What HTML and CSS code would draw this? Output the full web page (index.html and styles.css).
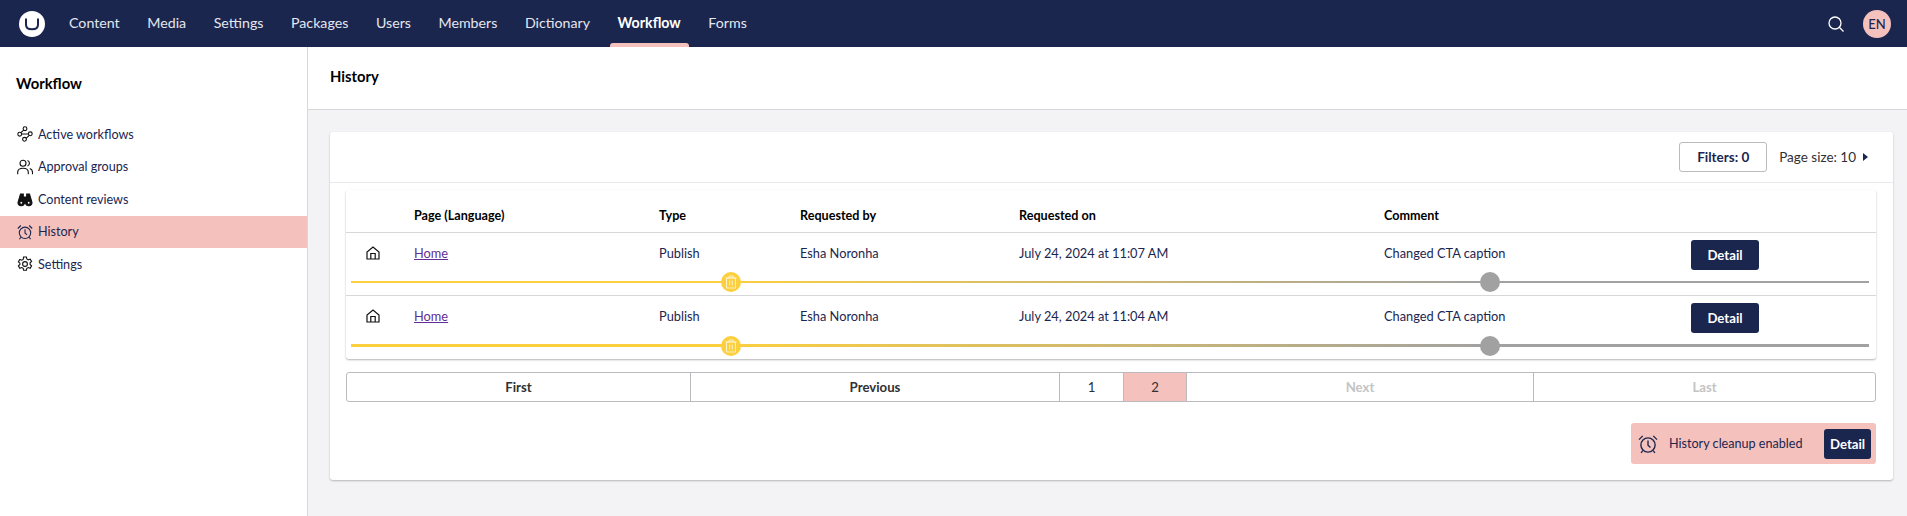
FILE: index.html
```html
<!DOCTYPE html>
<html lang="en">
<head>
    <meta charset="UTF-8">
    <meta name="viewport" content="width=device-width, initial-scale=1.0">
    <title>Workflow - History</title>
    <link rel="stylesheet" href="styles.css">
</head>
<body>
    <header class="topbar">
        <div class="logo">
            <svg viewBox="0 0 26 26" width="26" height="26"><circle cx="13" cy="13" r="13" fill="#fff"/><path d="M7 7.500v6.300c0 3.200 2 4.500 6 4.500s6-1.300 6-4.500V7.500" fill="none" stroke="#1b264f" stroke-width="2"/></svg>
        </div>
        <nav class="mainnav">
            <a href="#">Content</a>
            <a href="#">Media</a>
            <a href="#">Settings</a>
            <a href="#">Packages</a>
            <a href="#">Users</a>
            <a href="#">Members</a>
            <a href="#">Dictionary</a>
            <a href="#" class="active">Workflow</a>
            <a href="#">Forms</a>
        </nav>
        <div class="topbar-right">
            <svg class="search-icon" viewBox="0 0 16 16" width="16" height="16"><circle cx="7" cy="7" r="6" fill="none" stroke="#fff" stroke-width="1.300"/><path d="M11.300 11.300 15.500 15.500" stroke="#fff" stroke-width="1.300"/></svg>
            <div class="avatar">EN</div>
        </div>
    </header>

    <div class="layout">
        <aside class="sidebar">
            <h3>Workflow</h3>
            <ul class="tree">
                <li>
                    <svg class="tree-icon" viewBox="0 0 16 16"><circle cx="2.700" cy="8.200" r="1.900"/><circle cx="8" cy="2.700" r="1.900"/><circle cx="13.300" cy="7.800" r="1.900"/><circle cx="7.500" cy="13.300" r="1.900"/><path d="M4.600 8h6.800M6.700 4.200 3.900 6.700M12.300 9.400 9 12.300"/></svg>
                    Active workflows
                </li>
                <li>
                    <svg class="tree-icon" viewBox="0 0 16 16"><circle cx="6" cy="4.300" r="3"/><path d="M.7 15.300v-2c0-2.500 2-4 5.300-4s5.300 1.500 5.300 4v2M10.500 1.500a3 3 0 0 1 0 5.600M12.800 9.600c1.700.6 2.700 1.900 2.700 3.700v2"/></svg>
                    Approval groups
                </li>
                <li>
                    <svg class="tree-icon" viewBox="0 0 16 16"><path class="solid" d="M3.500 3h2.800v3h3.400V3h2.800l2.500 8.500a3.300 3.300 0 0 1-6.300 1.300H7.300A3.300 3.300 0 0 1 1 11.500z"/><circle class="hole" cx="4.300" cy="11.700" r="1.500"/><circle class="hole" cx="11.700" cy="11.700" r="1.500"/></svg>
                    Content reviews
                </li>
                <li class="selected">
                    <svg class="tree-icon" viewBox="0 0 16 16"><circle cx="8" cy="8.800" r="5.700"/><path d="M8 5.200v3.800l2 1.800M.8 4.500 3.800 1.500M15.200 4.500l-3-3M3.800 13.200l-1.300 2M12.200 13.200l1.300 2"/></svg>
                    History
                </li>
                <li>
                    <svg class="tree-icon" viewBox="0 0 16 16"><circle cx="8" cy="8" r="2.400"/><path d="M6.600 1h2.800l.4 2 1.500.8 1.900-.7 1.400 2.400-1.500 1.300v1.700l1.500 1.300-1.400 2.400-1.900-.7-1.500.8-.4 2H6.600l-.4-2-1.500-.8-1.900.7-1.400-2.400 1.500-1.300V7.200L1.400 5.900l1.400-2.400 1.900.7 1.500-.8z"/></svg>
                    Settings
                </li>
            </ul>
        </aside>

        <main class="content">
            <div class="page-header">History</div>
            <div class="page-body">
                <section class="card">
                    <div class="card-toolbar">
                        <button class="btn-outline">Filters: 0</button>
                        <span class="page-size">Page size: 10 <i class="caret"></i></span>
                    </div>
                    <div class="card-body">
                        <div class="history-table">
                            <div class="row head">
                                <span></span>
                                <span>Page (Language)</span>
                                <span>Type</span>
                                <span>Requested by</span>
                                <span>Requested on</span>
                                <span>Comment</span>
                                <span></span>
                            </div>
                            <div class="entry">
                                <div class="row">
                                    <svg class="home-icon" viewBox="0 0 14 14"><path d="M1 13V6l6-5 6 5v7zM4.800 13V7.500h4.400V13"/></svg>
                                    <a href="#">Home</a>
                                    <span>Publish</span>
                                    <span>Esha Noronha</span>
                                    <span>July 24, 2024 at 11:07 AM</span>
                                    <span>Changed CTA caption</span>
                                    <button class="btn-dark">Detail</button>
                                </div>
                                <div class="track">
                                    <span class="knob knob-yellow">
                                        <svg viewBox="0 0 12 14" width="12" height="14"><path d="M1.500 3h9v10h-9zM.5 3h11M4 3V1h4v2M4.700 5.500v5M7.300 5.500v5"/></svg>
                                    </span>
                                    <span class="knob knob-grey"></span>
                                </div>
                            </div>
                            <div class="entry">
                                <div class="row">
                                    <svg class="home-icon" viewBox="0 0 14 14"><path d="M1 13V6l6-5 6 5v7zM4.800 13V7.500h4.400V13"/></svg>
                                    <a href="#">Home</a>
                                    <span>Publish</span>
                                    <span>Esha Noronha</span>
                                    <span>July 24, 2024 at 11:04 AM</span>
                                    <span>Changed CTA caption</span>
                                    <button class="btn-dark">Detail</button>
                                </div>
                                <div class="track thick">
                                    <span class="knob knob-yellow">
                                        <svg viewBox="0 0 12 14" width="12" height="14"><path d="M1.500 3h9v10h-9zM.5 3h11M4 3V1h4v2M4.700 5.500v5M7.300 5.500v5"/></svg>
                                    </span>
                                    <span class="knob knob-grey"></span>
                                </div>
                            </div>
                        </div>

                        <div class="pagination">
                            <a href="#">First</a>
                            <a href="#">Previous</a>
                            <a href="#" class="num">1</a>
                            <a href="#" class="num current">2</a>
                            <a href="#" class="disabled">Next</a>
                            <a href="#" class="disabled">Last</a>
                        </div>

                        <div class="cleanup-wrap">
                            <div class="cleanup">
                                <svg class="cleanup-icon" viewBox="0 0 16 16"><circle cx="8" cy="8.800" r="5.700"/><path d="M8 5.200v3.800l2 1.800M.8 4.500 3.800 1.500M15.200 4.500l-3-3M3.800 13.200l-1.300 2M12.200 13.200l1.300 2"/></svg>
                                <span>History cleanup enabled</span>
                                <button class="btn-dark small">Detail</button>
                            </div>
                        </div>
                    </div>
                </section>
            </div>
        </main>
    </div>
</body>
</html>
```

FILE: styles.css
```css
* {
    box-sizing: border-box;
}

html, body {
    height: 100%;
}

body {
    margin: 0;
    font-family: 'Lato', sans-serif;
    font-size: 12.800px;
    color: #1b264f;
    background-color: #f3f3f5;
    overflow: hidden;
}

button {
    font-family: inherit;
    cursor: pointer;
}

/* top bar */
.topbar {
    display: flex;
    align-items: center;
    height: 47px;
    background-color: #1b264f;
    padding: 0 16px 0 19px;
}

.logo {
    display: flex;
    margin-right: 16px;
}

.mainnav {
    display: flex;
    align-self: stretch;
}

.mainnav a {
    display: flex;
    align-items: center;
    height: 47px;
    padding: 0 8px 2px;
    margin-right: 11.600px;
    font-size: 14.200px;
    color: #e4e6ee;
    text-decoration: none;
}

.mainnav a.active {
    position: relative;
    color: #fff;
    font-weight: 700;
}

.mainnav a.active::after {
    content: "";
    position: absolute;
    left: 0;
    right: 0;
    bottom: 0;
    height: 4px;
    background-color: #f5c1bc;
    border-radius: 3px 3px 0 0;
}

.topbar-right {
    display: flex;
    align-items: center;
    margin-left: auto;
    gap: 19px;
}

.avatar {
    display: flex;
    align-items: center;
    justify-content: center;
    width: 28px;
    height: 28px;
    border-radius: 50%;
    background-color: #f5c1bc;
    font-size: 13px;
    font-weight: 500;
}

/* page */
.layout {
    display: flex;
    height: 469px;
}

.sidebar {
    width: 308px;
    flex-shrink: 0;
    background-color: #fff;
    border-right: 1px solid #d8d7d9;
    color: #000;
}

.sidebar h3 {
    margin: 27px 0 0 16px;
    font-size: 14.800px;
    line-height: 18px;
    font-weight: 700;
}

.tree {
    list-style: none;
    margin: 26px 0 0;
    padding: 0;
}

.tree li {
    display: flex;
    align-items: center;
    gap: 5px;
    height: 32.500px;
    padding-left: 17px;
    font-size: 12.600px;
    color: #1b264f;
}

.tree li.selected {
    background-color: #f5c1bc;
}

.tree-icon {
    width: 16px;
    height: 16px;
    fill: none;
    stroke: #111;
    stroke-width: 1.100;
}

.tree li.selected .tree-icon {
    stroke: #1b264f;
}

.tree-icon .solid {
    fill: #111;
}

.tree-icon .hole {
    fill: #fff;
}

.content {
    flex: 1;
    min-width: 0;
}

.page-header {
    display: flex;
    align-items: center;
    height: 63px;
    padding: 0 22px 4px;
    background-color: #fff;
    border-bottom: 1px solid #d8d7d9;
    color: #000;
    font-size: 14.800px;
    font-weight: 700;
}

.page-body {
    padding: 22px 14px 0 22px;
}

.card {
    background-color: #fff;
    border-radius: 3px;
    box-shadow: 0 1px 2px rgba(0, 0, 0, 0.25);
    height: 348px;
}

.card-toolbar {
    display: flex;
    align-items: center;
    justify-content: flex-end;
    height: 51px;
    padding: 0 25px 0 0;
    border-bottom: 1px solid #e9e9eb;
}

.btn-outline {
    width: 88px;
    height: 30px;
    margin-right: 12px;
    background-color: #fff;
    border: 1px solid #bbbabf;
    border-radius: 3px;
    color: #1b264f;
    font-size: 13.500px;
    font-weight: 700;
}

.page-size {
    display: flex;
    align-items: center;
    gap: 7px;
    font-size: 13.500px;
    color: #303033;
}

.caret {
    width: 0;
    height: 0;
    border-left: 5px solid #1b264f;
    border-top: 4px solid transparent;
    border-bottom: 4px solid transparent;
}

.card-body {
    padding: 0 17px 0 16px;
}

/* table */
.history-table {
    margin-top: 7px;
    border-radius: 3px;
    box-shadow: 0 1px 2px rgba(0, 0, 0, 0.3);
}

.row {
    display: grid;
    grid-template-columns: 68px 245px 141px 219px 365px 307px 68px;
    align-items: center;
    height: 30px;
}

.entry .row > span,
.entry .row > a,
.home-icon {
    margin-bottom: 4px;
}

.row.head {
    align-items: end;
    height: 43px;
    padding-bottom: 9px;
    border-bottom: 1px solid #d8d7d9;
    color: #000;
    font-size: 12.600px;
    font-weight: 700;
}

.row a {
    color: #5f2f96;
}

.home-icon {
    width: 14px;
    height: 14px;
    margin-left: 20px;
    fill: none;
    stroke: #111;
    stroke-width: 1.200;
}

.entry {
    height: 63px;
    padding-top: 7px;
    border-bottom: 1px solid #d8d7d9;
}

.entry:last-child {
    border-bottom: 0;
}

.btn-dark {
    height: 30px;
    background-color: #1b264f;
    border: 0;
    border-radius: 3px;
    color: #fff;
    font-size: 13.200px;
    font-weight: 700;
}

.btn-dark.small {
    width: 47px;
    flex-shrink: 0;
}

/* the yellow to grey slider */
.track {
    position: relative;
    height: 2px;
    margin: 11px 7px 0 5px;
    background: linear-gradient(90deg, #fccf3f 25%, #a1a1a1 75%);
}

.track.thick {
    height: 3px;
}

.knob {
    position: absolute;
    top: 50%;
    display: flex;
    align-items: center;
    justify-content: center;
    width: 20px;
    height: 20px;
    margin: -10px 0 0 -10px;
    border-radius: 50%;
}

.knob-yellow {
    left: 25%;
    background-color: #fccf3f;
}

.knob-yellow svg {
    fill: none;
    stroke: #fff;
    stroke-width: 1;
    opacity: 0.700;
}

.knob-grey {
    left: 75%;
    background-color: #a1a1a1;
}

/* pagination */
.pagination {
    display: grid;
    grid-template-columns: 343px 369px 64px 63px 347px 1fr;
    height: 30px;
    margin-top: 13px;
    border: 1px solid #bbbabf;
    border-radius: 3px;
}

.pagination a {
    display: flex;
    align-items: center;
    justify-content: center;
    border-left: 1px solid #bbbabf;
    font-size: 13.200px;
    color: #303033;
    font-weight: 700;
    text-decoration: none;
}

.pagination a:first-child {
    border-left: 0;
}

.pagination a.num {
    font-weight: 400;
}

.pagination a.current {
    background-color: #f5c1bc;
}

.pagination a.disabled {
    color: #c4c4c4;
}

/* cleanup notice */
.cleanup-wrap {
    display: flex;
    justify-content: flex-end;
    margin-top: 21px;
}

.cleanup {
    display: flex;
    align-items: center;
    width: 245px;
    height: 41px;
    padding: 0 5px 0 7px;
    background-color: #f5c1bc;
    border-radius: 3px;
}

.cleanup-icon {
    width: 20px;
    height: 20px;
    flex-shrink: 0;
    margin-right: 11px;
    fill: none;
    stroke: #1b264f;
    stroke-width: 1.100;
}

.cleanup span {
    flex: 1;
    font-size: 12.600px;
}
```
